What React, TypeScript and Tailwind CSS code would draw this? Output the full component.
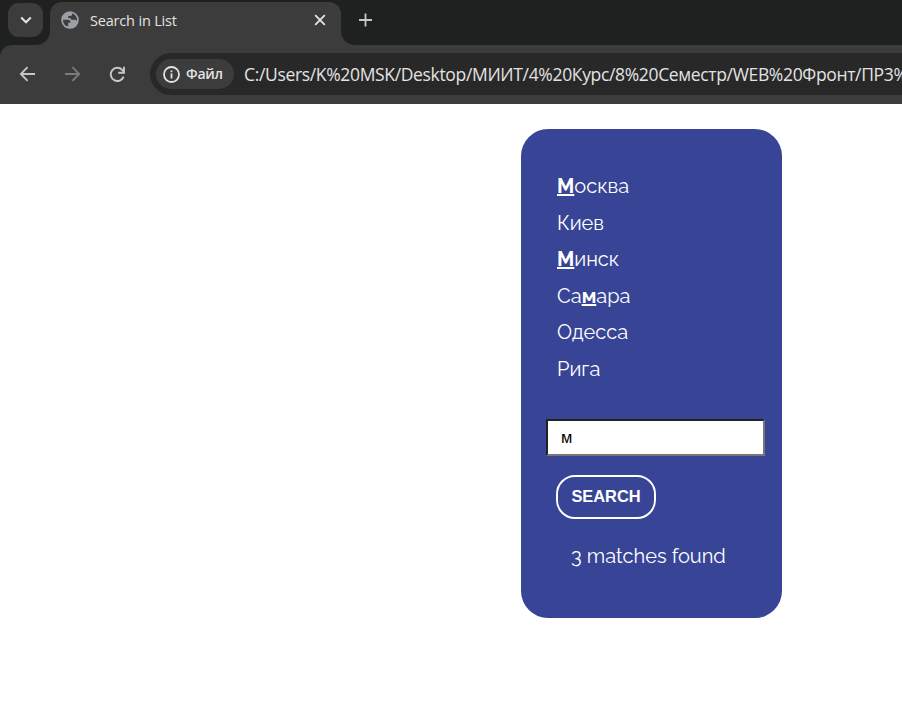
import React from 'react';

type City = { before: string; match?: string; after?: string };

const cities: City[] = [
  { before: '', match: 'М', after: 'осква' },
  { before: 'Киев' },
  { before: '', match: 'М', after: 'инск' },
  { before: 'Са', match: 'м', after: 'ара' },
  { before: 'Одесса' },
  { before: 'Рига' },
];

type IconProps = { d: string; size: number; width?: number; className?: string };

function StrokeIcon({ d, size, width = 2, className }: IconProps) {
  return (
    <svg width={size} height={size} viewBox={`0 0 ${size} ${size}`} fill="none" stroke="currentColor" strokeWidth={width} className={className}>
      <path d={d} />
    </svg>
  );
}

function Globe() {
  return (
    <svg width="18" height="18" viewBox="0 0 18 18" className="mt-[1px] text-[#9aa0a6]">
      <circle cx="9" cy="9" r="8.8" fill="currentColor" />
      <path
        d="M2 8.7h4.6c2 0 2.9 1 3 3H7.2v3.9A7 7 0 0 1 2 8.7ZM11.2 2.3A7 7 0 0 1 15.9 10c-.5-.9-1.2-1.3-2.2-1.3h-2.4c-1.3 0-1.9-.6-1.9-1.7H7.2V5.1h2c1.3 0 2-.7 2-2Z"
        fill="#3c3c3c"
      />
    </svg>
  );
}

function TabStrip() {
  return (
    <div className="flex h-[45px] bg-[#1f2120]">
      <div className="w-[50px] shrink-0 bg-[#3c3c3c]">
        <div className="h-full rounded-br-[14px] bg-[#1f2120] pl-2 pt-[3px]">
          <button className="flex h-[34px] w-[35px] items-center justify-center rounded-[11px] bg-[#3c3c3c] text-[#e3e3e3]">
            <StrokeIcon d="M1.2 3.5 6 8.3 10.8 3.5" size={12} />
          </button>
        </div>
      </div>
      <div className="mt-[2px] flex h-[43px] w-[291px] shrink-0 items-start rounded-t-[12px] bg-[#3c3c3c] pl-[11px] pt-2">
        <Globe />
        <span className="ml-[11px] text-[14.5px] leading-[21px] tracking-[-0.18px] text-[#e3e3e3]">Search in List</span>
        <StrokeIcon d="M1.2 1.2 10.8 10.8M10.8 1.2 1.2 10.8" size={12} width={1.8} className="ml-auto mr-[15px] mt-[4px] text-[#e3e3e3]" />
      </div>
      <div className="flex-1 bg-[#3c3c3c]">
        <div className="h-full rounded-bl-[14px] bg-[#1f2120] pl-[17px] pt-[13px]">
          <StrokeIcon d="M7.5 .5v13M1 7h13" size={14} width={1.8} className="text-[#c7c7c7]" />
        </div>
      </div>
    </div>
  );
}

function Toolbar() {
  return (
    <div className="bg-[#1f2120]">
      <div className="flex h-[59px] items-start overflow-hidden rounded-tl-[12px] bg-[#3c3c3c] pt-2">
        <div className="flex h-[42px] shrink-0 items-center pl-[19px] pb-[1px]">
          <StrokeIcon d="M16 8H2M8.6 1.2 1.8 8l6.8 6.8" size={16} width={1.8} className="text-[#c7c7c7]" />
          <StrokeIcon d="M1 8h14M8.4 1.2 15.2 8l-6.8 6.8" size={16} width={1.8} className="ml-[29px] text-[#7b7b7b]" />
          <StrokeIcon d="M14.6 10.6A6.6 6.6 0 1 1 13.2 3.9L15 6M15 .8v5.9H9.2" size={16} width={1.9} className="ml-[29px] text-[#c7c7c7]" />
        </div>
        <div className="ml-[25px] flex h-[42px] flex-1 items-center overflow-hidden rounded-l-full bg-[#282828] pl-[6px]">
          <div className="flex h-[30px] w-[78px] shrink-0 items-center rounded-full bg-[#3c3c3c] pl-[7px] text-[#e3e3e3]">
            <svg width="17" height="17" viewBox="0 0 17 17" fill="none" stroke="currentColor" strokeWidth="1.8" className="shrink-0">
              <circle cx="8.5" cy="8.5" r="7.5" />
              <path d="M8.5 7.6v4.9M8.5 4.4v1.9" />
            </svg>
            <span className="ml-[6px] text-[14px] font-semibold leading-5 tracking-[-0.2px]">Файл</span>
          </div>
          <span className="ml-[10px] whitespace-nowrap text-[17.5px] leading-6 tracking-[-0.34px] text-[#e3e3e3]">
            C:/Users/K%20MSK/Desktop/МИИТ/4%20Курс/8%20Семестр/WEB%20Фронт/ПР3%
          </span>
        </div>
      </div>
    </div>
  );
}

export default function App() {
  return (
    <div className="h-[711px] w-[902px] overflow-hidden bg-white font-['Open_Sans','Noto_Sans',sans-serif]">
      <TabStrip />
      <Toolbar />
      <main className="ml-[521px] mt-[25px] h-[489px] w-[261px] rounded-[27px] bg-[#384596] pt-[39px] font-['Raleway','Lato',sans-serif] text-white">
        <ul className="pl-9">
          {cities.map((city) => (
            <li key={`${city.before}${city.match ?? ''}${city.after ?? ''}`} className="h-[36.5px] text-[20px] leading-[36.5px]">
              {city.before}
              {city.match && <b className="underline decoration-2 underline-offset-1">{city.match}</b>}
              {city.after}
            </li>
          ))}
        </ul>
        <input
          defaultValue="м"
          className="ml-[25px] mt-8 block h-[37px] w-[219px] border-2 border-b-[#767676] border-l-[#222222] border-r-[#767676] border-t-[#222222] bg-white px-[13px] font-['Liberation_Sans',sans-serif] text-[16.5px] text-black outline-none"
        />
        <button className="ml-[35px] mt-[19px] block h-[44px] w-[100px] rounded-[19px] border-2 border-white pb-[2px] font-['Liberation_Sans',sans-serif] text-[16.4px] font-bold">
          SEARCH
        </button>
        <p className="ml-[50px] mt-[22px] whitespace-nowrap text-[20px] leading-[30px]">3 matches found</p>
      </main>
    </div>
  );
}
